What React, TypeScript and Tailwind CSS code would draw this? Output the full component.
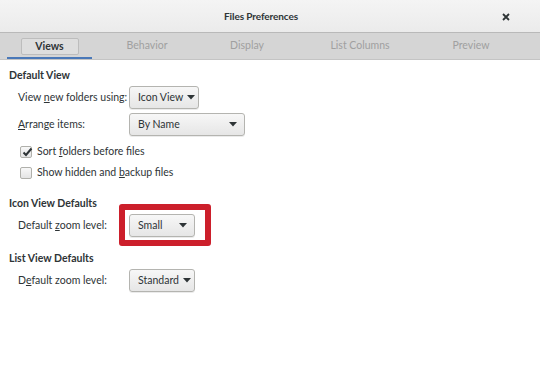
import React from "react";

const font = { fontFamily: "Lato, 'Noto Sans', sans-serif" };

function Arrow() {
  return (
    <svg width="8" height="5" viewBox="0 0 8 5" className="shrink-0">
      <path d="M0 0 L8 0 L4 4.5 Z" fill="#2e3436" />
    </svg>
  );
}

function Combo({ label, width }: { label: string; width: number }) {
  return (
    <div
      className="h-[23px] flex items-center justify-between gap-[4px] pl-[8px] pr-[7px] rounded-[3px] border border-[#b4b4b0] bg-gradient-to-b from-[#f7f7f7] to-[#e6e6e6] shadow-[0_1px_0_rgba(0,0,0,0.08)] text-[#2e3436] whitespace-nowrap"
      style={{ width }}
    >
      <span>{label}</span>
      <Arrow />
    </div>
  );
}

function Check({ checked }: { checked: boolean }) {
  return (
    <div className="w-[12px] h-[12px] rounded-[2px] border border-[#b0b0ab] bg-gradient-to-b from-[#f8f8f8] to-[#e4e4e4] flex items-center justify-center relative shrink-0">
      {checked && (
        <svg width="12" height="12" viewBox="0 0 12 12" className="absolute -top-[1px] left-[0px]">
          <path d="M2.5 6.5 L5 9 L10.5 2.5" stroke="#2e3436" strokeWidth="2" fill="none" />
        </svg>
      )}
    </div>
  );
}

export default function App() {
  return (
    <div className="w-[540px] h-[381px] bg-white text-[10.5px] text-[#2e3436] overflow-hidden flex flex-col" style={font}>
      {/* title bar */}
      <div className="h-[33px] shrink-0 bg-gradient-to-b from-[#f4f4f4] to-[#ebebeb] border-b border-[#b9b9b9] flex items-center relative">
        <div className="flex-1 text-center font-bold text-[10px] tracking-[-0.1px] text-[#2e3436] pr-[18px]">Files Preferences</div>
        <div className="absolute right-[30px] top-[13px]">
          <svg width="8" height="8" viewBox="0 0 8 8">
            <path d="M1 1 L7 7 M7 1 L1 7" stroke="#2e3436" strokeWidth="1.8" />
          </svg>
        </div>
      </div>
      {/* tab bar */}
      <div className="h-[27px] shrink-0 bg-[#d5d5d5] border-b border-[#c4c4c4] flex pl-[7px] text-[#a0a0a0] whitespace-nowrap">
        <div className="w-[85px] flex flex-col items-center relative">
          <div className="mt-[5px] h-[17px] w-[58px] border border-[#bdbdbd] rounded-[2px] bg-[#dedede] flex items-center justify-center font-bold text-[#2e3436]">
            Views
          </div>
          <div className="absolute bottom-0 left-0 right-0 h-[2px] bg-[#4a78b8]" />
        </div>
        <div className="w-[110px] flex items-center justify-center">Behavior</div>
        <div className="w-[90px] flex items-center justify-center">Display</div>
        <div className="w-[136px] flex items-center justify-center">List Columns</div>
        <div className="w-[86px] flex items-center justify-center">Preview</div>
      </div>
      {/* content */}
      <div className="flex flex-col pl-[9px] pt-[8px] whitespace-nowrap">
        <div className="h-[14px] leading-[14px] font-bold">Default View</div>
        <div className="flex items-center mt-[4px] h-[23px]">
          <div className="w-[120px] pl-[9px]">
            View <u>n</u>ew folders using:
          </div>
          <Combo label="Icon View" width={70} />
        </div>
        <div className="flex items-center mt-[4px] h-[23px]">
          <div className="w-[120px] pl-[9px]">
            <u>A</u>rrange items:
          </div>
          <Combo label="By Name" width={116} />
        </div>
        <div className="flex items-center mt-[9px] h-[14px] pl-[11px] gap-[5px]">
          <Check checked />
          <span>
            Sort <u>f</u>olders before files
          </span>
        </div>
        <div className="flex items-center mt-[7px] h-[14px] pl-[11px] gap-[5px]">
          <Check checked={false} />
          <span>
            Show hidden and <u>b</u>ackup files
          </span>
        </div>
        <div className="h-[14px] leading-[14px] font-bold mt-[16px]">Icon View Defaults</div>
        <div className="flex items-center mt-[4px] h-[23px]">
          <div className="w-[120px] pl-[9px]">
            Default <u>z</u>oom level:
          </div>
          <div className="relative">
            <Combo label="Small" width={66} />
            <div className="absolute left-[-10px] right-[-16px] top-[-10px] bottom-[-9px] border-[6px] border-[#cc1f2b] rounded-[3px]" />
          </div>
        </div>
        <div className="h-[14px] leading-[14px] font-bold mt-[14px]">List View Defaults</div>
        <div className="flex items-center mt-[4px] h-[23px]">
          <div className="w-[120px] pl-[9px]">
            D<u>e</u>fault zoom level:
          </div>
          <Combo label="Standard" width={66} />
        </div>
      </div>
    </div>
  );
}
